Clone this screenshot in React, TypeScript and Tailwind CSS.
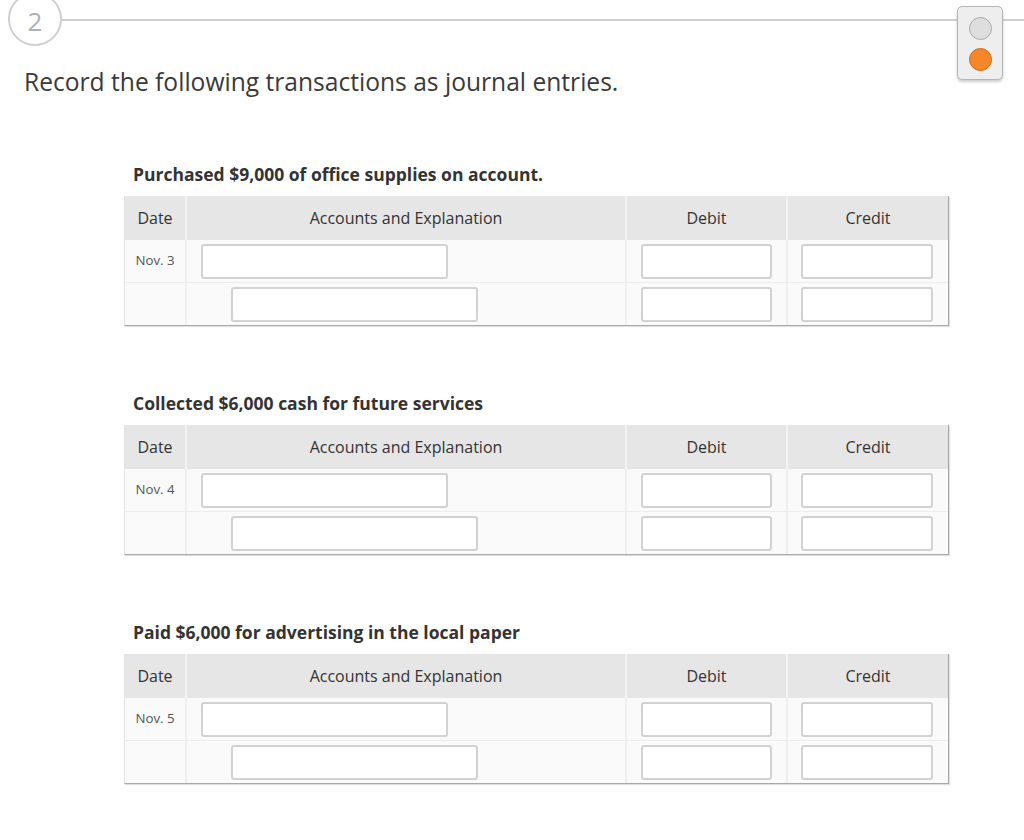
import React from "react";

const entries = [
  { title: "Purchased $9,000 of office supplies on account.", date: "Nov. 3" },
  { title: "Collected $6,000 cash for future services", date: "Nov. 4" },
  { title: "Paid $6,000 for advertising in the local paper", date: "Nov. 5" },
];

function Field({ w }: { w: string }) {
  return <div className={`h-[35px] ${w} rounded-[3px] border-2 border-[#d2d2d2] bg-white`} />;
}

function Journal({ title, date, first }: { title: string; date: string; first: boolean }) {
  return (
    <div className={`pl-[124px] ${first ? "mt-[66px]" : "mt-[66px]"}`}>
      <div className="pl-[9px] text-[17.5px] leading-[22px] font-bold text-[#333]">{title}</div>
      <div className="mt-[11px] w-[825px] border-b border-r border-[#a9a9a9] border-l border-l-[#e2e2e2] shadow-[1px_1px_1px_rgba(0,0,0,0.12)]">
        <div className="flex h-[44px] bg-[#e6e6e6] text-[16px] text-[#333]">
          <div className="w-[62px] flex items-center justify-center border-r-2 border-[#f3f3f3]">Date</div>
          <div className="w-[440px] flex items-center justify-center border-r-2 border-[#f3f3f3]">Accounts and Explanation</div>
          <div className="w-[161px] flex items-center justify-center border-r-2 border-[#f3f3f3]">Debit</div>
          <div className="flex-1 flex items-center justify-center">Credit</div>
        </div>
        <div className="flex h-[43px] bg-[#fafafa] border-b border-[#ececec]">
          <div className="w-[62px] flex items-center justify-center border-r-2 border-[#efefef] text-[13.3px] text-[#555]">{date}</div>
          <div className="w-[440px] flex items-center pl-[14px] border-r-2 border-[#efefef]">
            <Field w="w-[247px]" />
          </div>
          <div className="w-[161px] flex items-center pl-[14px] border-r-2 border-[#efefef]">
            <Field w="w-[131px]" />
          </div>
          <div className="flex-1 flex items-center pl-[13px]">
            <Field w="w-[132px]" />
          </div>
        </div>
        <div className="flex h-[42px] bg-[#fafafa]">
          <div className="w-[62px] border-r-2 border-[#efefef]" />
          <div className="w-[440px] flex items-center pl-[44px] border-r-2 border-[#efefef]">
            <Field w="w-[247px]" />
          </div>
          <div className="w-[161px] flex items-center pl-[14px] border-r-2 border-[#efefef]">
            <Field w="w-[131px]" />
          </div>
          <div className="flex-1 flex items-center pl-[13px]">
            <Field w="w-[132px]" />
          </div>
        </div>
      </div>
    </div>
  );
}

export default function App() {
  return (
    <div className="relative w-[1024px] h-[840px] overflow-hidden bg-white" style={{ fontFamily: '"Open Sans", "Liberation Sans", sans-serif' }}>
      <div className="flex items-center pl-[8px] mt-[-8px]">
        <div className="w-[54px] h-[54px] shrink-0 rounded-full border-2 border-[#cfcfcf] flex items-center justify-center text-[26px] text-[#b0b0b0] pt-[5px]">2</div>
        <div className="flex-1 h-[2px] bg-[#cfcfcf] mt-[2px]" />
      </div>
      <div className="absolute left-[957px] top-[6px] w-[46px] h-[74px] rounded-[5px] border border-[#b5b5b5] bg-[#eeeeee] shadow-[0_2px_3px_rgba(0,0,0,0.2)] flex flex-col items-center pt-[10px] gap-[8px]">
        <div className="w-[23px] h-[23px] rounded-full border border-[#a8a8a8] bg-[#dedede]" />
        <div className="w-[23px] h-[23px] rounded-full border border-[#d06a1a] bg-[#f5862a]" />
      </div>
      <div className="mt-[21px] pl-[24px] text-[24.6px] leading-[30px] text-[#3a3a3a]">
        Record the following transactions as journal entries.
      </div>
      {entries.map((e, i) => (
        <Journal key={i} title={e.title} date={e.date} first={i === 0} />
      ))}
    </div>
  );
}
